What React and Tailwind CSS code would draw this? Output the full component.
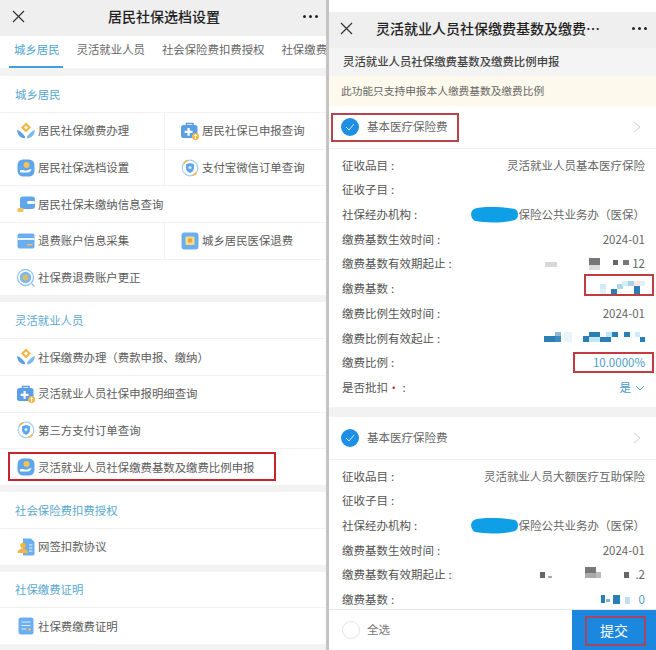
import React from "react";

function IconHands() {
  return (
    <svg width="20" height="20" viewBox="0 0 20 20">
      <path d="M10 1.500l5 5-5 5-5-5z" fill="#f3b544" />
      <path d="M10 4.500l2 2-2 2-2-2z" fill="#fff" />
      <path d="M1 9c3 .5 5 3 8 6.500.4.800 0 2-1 1.800C4.500 17 1.500 14 1 9z" fill="#5a9fe6" />
      <path d="M19 9c-3 .5-5 3-8 6.500-.4.800 0 2 1 1.800 3.500-.3 6.500-3.300 7-8.300z" fill="#7db8ee" />
    </svg>
  );
}
function IconKit() {
  return (
    <svg width="20" height="20" viewBox="0 0 20 20">
      <path d="M6.500 4.500V2.500h6.500v2" fill="none" stroke="#5a9fe6" strokeWidth="1.500" />
      <rect x="1" y="4" width="16.500" height="13" rx="2.500" fill="#5a9fe6" />
      <path d="M7.500 7h2.200v2.800h2.800V12H9.700v2.800H7.500V12H4.700V9.800h2.800z" fill="#fff" />
      <circle cx="15.500" cy="15.500" r="3.500" fill="#f3b544" />
      <path d="M15.500 18v-4.500M13.800 15.200l1.700-1.700 1.700 1.700" fill="none" stroke="#fff" strokeWidth=".9" />
    </svg>
  );
}
function IconPerson() {
  return (
    <svg width="20" height="20" viewBox="0 0 20 20">
      <rect x="1.500" y="1.500" width="17" height="17" rx="5.500" fill="#5fa6ea" />
      <circle cx="10.500" cy="7" r="3" fill="#f4c25a" />
      <path d="M4 12.500c2-1.200 3.500 .2 5.500 .2s3-1 6-1.700c-.5 2-2 3.500-4 3.500H4z" fill="#fff" />
    </svg>
  );
}
function IconShield() {
  return (
    <svg width="20" height="20" viewBox="0 0 20 20">
      <circle cx="10" cy="10" r="7.800" fill="none" stroke="#a9d0f2" strokeWidth="1.200" />
      <path d="M3.500 5.500a8 8 0 0 1 4-3M16.500 14.500a8 8 0 0 1-4 3" fill="none" stroke="#f3b544" strokeWidth="1.500" />
      <path d="M10 5l4 1.300v3.700c0 2.800-2.200 4.200-4 5-1.800-.8-4-2.200-4-5V6.300z" fill="#5fa6ea" />
      <circle cx="10" cy="9.500" r="1.600" fill="#dcecfb" />
    </svg>
  );
}
function IconWallet() {
  return (
    <svg width="20" height="20" viewBox="0 0 20 20">
      <rect x="4" y="2.500" width="15" height="12.500" rx="3" fill="#5fa6ea" />
      <rect x="11" y="7" width="8" height="3" rx="1.500" fill="#fff" />
      <rect x="1.500" y="14" width="6" height="4" rx="1" fill="#f4c25a" />
    </svg>
  );
}
function IconCard() {
  return (
    <svg width="20" height="20" viewBox="0 0 20 20">
      <rect x="1.500" y="2.500" width="17" height="15" rx="2" fill="#6aaeef" />
      <rect x="1.500" y="7" width="17" height="2" fill="#e6f2fc" />
      <rect x="11" y="13" width="5.500" height="1.500" fill="#e8c268" />
    </svg>
  );
}
function IconBox() {
  return (
    <svg width="20" height="20" viewBox="0 0 20 20">
      <rect x="1.500" y="1.500" width="17" height="17" rx="3" fill="#6aaeef" />
      <rect x="5.500" y="5.500" width="9" height="8.500" rx="1" fill="#f7d98a" />
      <rect x="8" y="7.500" width="4" height="4" fill="#e8a93a" />
    </svg>
  );
}
function IconSearch() {
  return (
    <svg width="20" height="20" viewBox="0 0 20 20">
      <circle cx="9.500" cy="9.500" r="8" fill="none" stroke="#8fc2ef" strokeWidth="1.300" />
      <circle cx="9.500" cy="9.500" r="5.800" fill="#7fb7ea" />
      <circle cx="9.500" cy="9.500" r="3" fill="#d9bd6e" />
      <path d="M15.500 15.500l3 3" stroke="#8fc2ef" strokeWidth="1.300" />
    </svg>
  );
}
function IconDoc() {
  return (
    <svg width="20" height="20" viewBox="0 0 20 20">
      <path d="M7 1.500h8l3.500 3.500v12a1.500 1.500 0 0 1-1.500 1.500H7z" fill="#6aaeef" />
      <path d="M13 8h3.500M13 11h3.500M13 14h3.500" stroke="#e6f2fc" strokeWidth="1" />
      <circle cx="7" cy="8.500" r="2.800" fill="#f3b544" />
      <path d="M1.500 16c0-3 2.500-4.500 5.500-4.500s5 1.500 5 4.500z" fill="#f3b544" />
    </svg>
  );
}
function IconList() {
  return (
    <svg width="20" height="20" viewBox="0 0 20 20">
      <rect x="2.500" y="1.500" width="15" height="17" rx="2.500" fill="#6aaeef" />
      <path d="M5.500 6h9M5.500 9.500h9M5.500 13h5" stroke="#dcecfb" strokeWidth="1.200" />
      <circle cx="13.500" cy="13.500" r="1.400" fill="#e8c268" />
    </svg>
  );
}

function Item({ icon, text }) {
  return (
    <div className="flex h-[36.750px] items-center border-t border-[#f2f2f2] pl-[16px]">
      <span className="mr-[2px] flex w-[20px] shrink-0 items-center justify-center">{icon}</span>
      <span className="whitespace-nowrap text-[11.400px] text-[#5c5c5c]">{text}</span>
    </div>
  );
}

function Pair({ a, b }) {
  return (
    <div className="grid grid-cols-[165px_1fr]">
      <div className="border-r border-[#f2f2f2]">{a}</div>
      <div className="ml-[-1px]">{b}</div>
    </div>
  );
}

function Heading({ children }) {
  return (
    <div className="flex h-[36px] items-center pl-[15px] pt-[1px] text-[11.400px] text-[#5aa8cf]">{children}</div>
  );
}

function Gap({ h = "h-[7px]" }) {
  return <div className={`${h} shrink-0 bg-[#f2f2f2]`} />;
}

function CloseIcon() {
  return (
    <svg width="13" height="13" viewBox="0 0 13 13">
      <path d="M1 1l11 11M12 1L1 12" stroke="#333" strokeWidth="1.200" />
    </svg>
  );
}

function Dots() {
  return (
    <div className="flex gap-[3px]">
      <span className="h-[3px] w-[3px] rounded-full bg-[#222]" />
      <span className="h-[3px] w-[3px] rounded-full bg-[#222]" />
      <span className="h-[3px] w-[3px] rounded-full bg-[#222]" />
    </div>
  );
}

function Left() {
  return (
    <div className="flex h-[650px] w-[326px] shrink-0 flex-col overflow-hidden bg-white">
      <div className="flex h-[36px] shrink-0 items-center justify-between bg-[#efefef] pb-[4px] pl-[12px] pr-[8px]">
        <CloseIcon />
        <span className="text-[14px] font-medium text-[#222]">居民社保选档设置</span>
        <Dots />
      </div>
      <div className="relative flex h-[32px] shrink-0 items-center overflow-hidden whitespace-nowrap bg-white pb-[4px] pl-[14px] text-[11.400px] text-[#666]">
        <span className="mr-[17px] text-[#4fa6d3]">城乡居民</span>
        <span className="mr-[17px]">灵活就业人员</span>
        <span className="mr-[17px]">社会保险费扣费授权</span>
        <span>社保缴费证明</span>
        <span className="absolute bottom-0 left-[9px] h-[2.500px] w-[54px] bg-[#3f9fe0]" />
      </div>
      <Gap h="h-[8px]" />
      <Heading>城乡居民</Heading>
      <Pair a={<Item icon={<IconHands />} text="居民社保缴费办理" />} b={<Item icon={<IconKit />} text="居民社保已申报查询" />} />
      <Pair a={<Item icon={<IconPerson />} text="居民社保选档设置" />} b={<Item icon={<IconShield />} text="支付宝微信订单查询" />} />
      <Item icon={<IconWallet />} text="居民社保未缴纳信息查询" />
      <Pair a={<Item icon={<IconCard />} text="退费账户信息采集" />} b={<Item icon={<IconBox />} text="城乡居民医保退费" />} />
      <Item icon={<IconSearch />} text="社保费退费账户更正" />
      <Gap />
      <Heading>灵活就业人员</Heading>
      <Item icon={<IconHands />} text="社保缴费办理（费款申报、缴纳）" />
      <Item icon={<IconKit />} text="灵活就业人员社保申报明细查询" />
      <Item icon={<IconShield />} text="第三方支付订单查询" />
      <div className="relative">
        <Item icon={<IconPerson />} text="灵活就业人员社保缴费基数及缴费比例申报" />
        <span className="absolute left-[8px] top-[4px] h-[29px] w-[268px] border-2 border-[#c8232c]" />
      </div>
      <Gap />
      <Heading>社会保险费扣费授权</Heading>
      <Item icon={<IconDoc />} text="网签扣款协议" />
      <Gap />
      <Heading>社保缴费证明</Heading>
      <Item icon={<IconList />} text="社保费缴费证明" />
      <Gap h="h-[6px]" />
    </div>
  );
}

function Mosaic({ w, h, rects }) {
  return (
    <svg width={w} height={h} viewBox={`0 0 ${w} ${h}`} className="block">
      {rects.map(([x, y, rw, rh, c], i) => (
        <rect key={i} x={x} y={y} width={rw} height={rh} fill={c} />
      ))}
    </svg>
  );
}

function Blob() {
  return (
    <svg width="48" height="16" viewBox="0 0 48 16" className="block">
      <path d="M3 2C10 -1 35 0 44 2c4 2 4 9 0 11-10 3-30 3-40 1C-1 11-1 4 3 2z" fill="#0e9fe6" />
    </svg>
  );
}

function Field({ label, star, children, blue }) {
  return (
    <div className="flex h-[24.700px] items-center justify-between">
      <span className="whitespace-nowrap text-[11.500px] text-[#555]">
        {label}
        {star && <span className="text-[#c8232c]">•</span>}
        <span className="ml-[3px]">:</span>
      </span>
      <span className={`flex items-center whitespace-nowrap text-[11.500px] ${blue ? "text-[#4a9cc8]" : "text-[#666]"}`}>
        {children}
      </span>
    </div>
  );
}

function CheckCircle() {
  return (
    <span className="flex h-[18px] w-[18px] items-center justify-center rounded-full bg-[#1f8fe5]">
      <svg width="10" height="8" viewBox="0 0 10 8">
        <path d="M1 4l3 3 5-6" fill="none" stroke="#cfe8fb" strokeWidth="1" />
      </svg>
    </span>
  );
}

function Chevron() {
  return (
    <svg width="8" height="12" viewBox="0 0 8 12">
      <path d="M1 1l6 5-6 5" fill="none" stroke="#cfcfcf" strokeWidth="1" />
    </svg>
  );
}

function CardHead({ boxed }) {
  return (
    <div className="relative flex h-[43px] shrink-0 items-center justify-between border-b border-[#efefef] pl-[12px] pr-[15px]">
      <div className="flex items-center gap-[8px]">
        <CheckCircle />
        <span className="text-[11.500px] text-[#666]">基本医疗保险费</span>
      </div>
      <Chevron />
      {boxed && <span className="absolute left-[2px] top-[7px] h-[29px] w-[128px] border-2 border-[#b8434a]" />}
    </div>
  );
}

function Right() {
  const b = "#2b7fb5";
  return (
    <div className="flex h-[650px] min-w-0 flex-1 flex-col overflow-hidden bg-white">
      <div className="h-[12px] shrink-0 bg-white" />
      <div className="flex h-[36px] shrink-0 items-center bg-[#efefef] pb-[4px] pl-[11px] pr-[9px]">
        <CloseIcon />
        <span className="ml-[23px] whitespace-nowrap text-[14px] font-medium text-[#222]">灵活就业人员社保缴费基数及缴费…</span>
        <span className="ml-auto"><Dots /></span>
      </div>
      <div className="flex h-[28px] shrink-0 items-center bg-[#f4f4f4] pl-[14px] text-[11.400px] font-medium text-[#444]">
        灵活就业人员社保缴费基数及缴费比例申报
      </div>
      <div className="flex h-[30px] shrink-0 items-center bg-[#fdf9ec] pl-[12px] text-[10.700px] text-[#666]">
        此功能只支持申报本人缴费基数及缴费比例
      </div>
      <CardHead boxed />
      <div className="shrink-0 pb-[7px] pl-[13px] pr-[11px] pt-[4px]">
        <Field label="征收品目">灵活就业人员基本医疗保险</Field>
        <Field label="征收子目" />
        <Field label="社保经办机构"><Blob />保险公共业务办（医保）</Field>
        <Field label="缴费基数生效时间">2024-01</Field>
        <Field label="缴费基数有效期起止">
          <Mosaic w={87} h={15} rects={[[0,5,12,5,"#d8d8d8"],[44,1,11,7,"#777"],[44,8,11,5,"#ddd"],[68,3,5,5,"#666"],[78,3,6,5,"#777"]]} />12
        </Field>
        <div className="relative">
          <Field label="缴费基数" blue>
            <Mosaic w={45} h={15} rects={[[0,3,6,5,"#cfeaf8"],[0,8,6,5,"#dff2fb"],[11,8,6,5,b],[17,3,6,5,"#a9d8ee"],[22,0,6,5,"#d2ecf8"],[28,0,6,5,"#a9d0e8"],[34,0,6,5,"#ffe4e4"],[34,5,6,9,b],[40,0,5,5,"#dff2fb"]]} />
          </Field>
          <span className="absolute right-[-9px] top-[-2px] h-[22px] w-[70px] border-2 border-[#c23b40]" />
        </div>
        <Field label="缴费比例生效时间">2024-01</Field>
        <Field label="缴费比例有效起止" blue>
          <Mosaic w={101} h={12} rects={[[0,4,11,6,b],[11,0,6,10,"#8fb9d6"],[11,4,6,6,"#3d8cc0"],[20,0,8,10,"#e8f6fc"],[39,4,6,6,b],[45,0,11,5,b],[45,5,11,5,"#bfe6f5"],[56,5,11,5,b],[62,0,6,5,"#bfe6f5"],[68,0,6,5,b],[80,0,6,5,b],[91,0,5,5,"#cfeaf8"],[96,5,5,5,b]]} />
        </Field>
        <div className="relative">
          <Field label="缴费比例" blue>10.0000%</Field>
          <span className="absolute right-[-9px] top-[1px] h-[21px] w-[81px] border-2 border-[#c23b40]" />
        </div>
        <Field label="是否批扣" star blue>
          是
          <svg width="10" height="6" viewBox="0 0 10 6" className="ml-[4px]">
            <path d="M1 1l4 4 4-4" fill="none" stroke="#4a9cc8" strokeWidth="1" />
          </svg>
        </Field>
      </div>
      <div className="h-[10px] shrink-0 bg-[#f2f2f2]" />
      <CardHead />
      <div className="min-h-0 flex-1 overflow-hidden pl-[13px] pr-[11px] pt-[4px]">
        <Field label="征收品目">灵活就业人员大额医疗互助保险</Field>
        <Field label="征收子目" />
        <Field label="社保经办机构"><Blob />保险公共业务办（医保）</Field>
        <Field label="缴费基数生效时间">2024-01</Field>
        <Field label="缴费基数有效期起止">
          <Mosaic w={95} h={15} rects={[[0,5,5,6,"#666"],[8,9,4,2,"#aaa"],[45,0,11,6,"#777"],[45,6,11,5,"#aaa"],[56,5,5,6,"#bbb"],[84,5,5,6,"#666"]]} />.2
        </Field>
        <Field label="缴费基数" blue>
          <Mosaic w={38} h={12} rects={[[0,1,4,8,"#2b7fb5"],[5,5,4,3,"#7fb5d6"],[12,1,7,9,"#2b7fb5"],[24,3,5,7,"#bfe0f0"]]} />0
        </Field>
      </div>
      <div className="flex h-[41px] shrink-0 items-stretch border-t border-[#e6e6e6] bg-white">
        <div className="flex flex-1 items-center pl-[13px]">
          <span className="h-[18px] w-[18px] rounded-full border border-[#e4e4e4]" />
          <span className="ml-[7px] text-[11.500px] text-[#777]">全选</span>
        </div>
        <div className="relative flex w-[84px] items-center justify-center bg-[#1b87df] text-[14px] text-white">
          提交
          <span className="absolute left-[13px] top-[6px] h-[30px] w-[61px] border-2 border-[#a8455f]" />
        </div>
      </div>
    </div>
  );
}

export default function App() {
  return (
    <div className="flex h-[650px] w-[656px] overflow-hidden bg-white font-['Noto_Sans_CJK_SC','Noto_Sans',sans-serif]">
      <Left />
      <div className="w-[3px] shrink-0 bg-[#c4c4c4]" />
      <Right />
    </div>
  );
}
